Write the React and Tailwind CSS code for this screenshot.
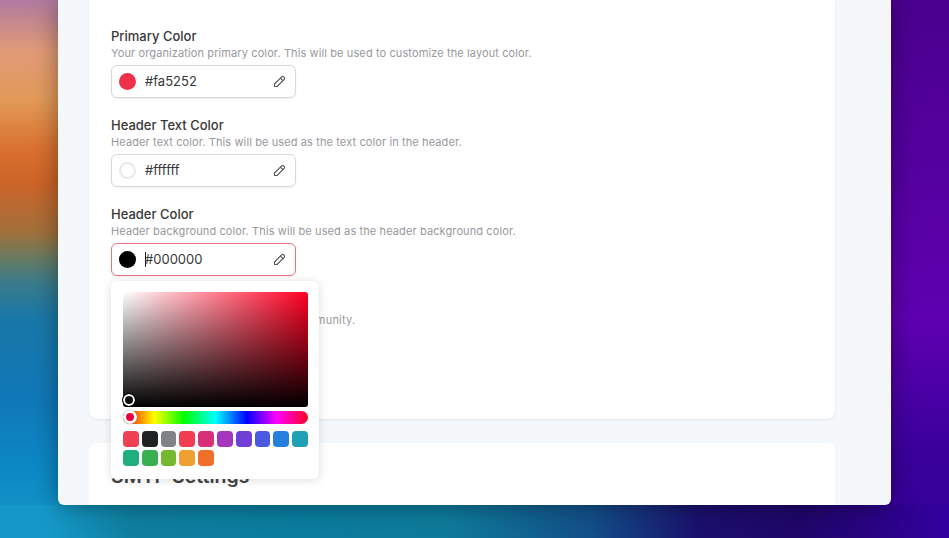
const swatches = [
  'bg-[#ef4056]', 'bg-[#212224]', 'bg-[#7f8388]', 'bg-[#f23c50]', 'bg-[#d92f78]',
  'bg-[#a436c0]', 'bg-[#6f3fd8]', 'bg-[#4a5ae0]', 'bg-[#2480dc]', 'bg-[#1fa0b4]',
  'bg-[#1fae80]', 'bg-[#38b050]', 'bg-[#74b82e]', 'bg-[#f0a030]', 'bg-[#f0702a]',
]

function PenIcon() {
  return (
    <svg viewBox="0 0 24 24" fill="none" stroke="currentColor" strokeWidth="1.75" strokeLinecap="round" strokeLinejoin="round" className="ml-auto h-[15px] w-[15px] text-[#555]">
      <path d="M4 20v-4L15.5 4.5a2.1 2.1 0 0 1 3 0l1 1a2.1 2.1 0 0 1 0 3L8 20z" />
      <path d="M13.5 6.5l4 4" />
    </svg>
  )
}

function ColorPopover() {
  return (
    <div className="absolute left-0 top-full z-10 mt-[5px] h-[198px] w-[208px] rounded-md bg-white py-[11px] pl-[12px] pr-[11px] shadow-[0_1px_10px_rgba(0,0,0,0.14)]">
      <div className="relative h-[115px] rounded-[3px] bg-[linear-gradient(0deg,#000,transparent),linear-gradient(90deg,#fff,#ff0022)]">
        <span className="absolute left-0 top-[102px] h-[12px] w-[12px] rounded-full border-2 border-white outline outline-1 outline-black" />
      </div>
      <div className="relative mt-[4px] h-[13px] rounded-full bg-[linear-gradient(90deg,#ff0000,#ffff00_17%,#00ff00_33%,#00ffff_50%,#0000ff_67%,#ff00ff_83%,#ff0022)]">
        <span className="absolute -top-px left-0 h-[14px] w-[14px] rounded-full border-[3px] border-white bg-[#e8003c] shadow-[0_0_1px_rgba(0,0,0,0.6)]" />
      </div>
      <div className="mt-[7px] grid grid-cols-10 gap-[3px]">
        {swatches.map((color, i) => (
          <div key={i} className={`h-[16px] rounded-[4px] ${color}`} />
        ))}
      </div>
    </div>
  )
}

function ColorField({ label, description, value, swatch, focused, children }) {
  return (
    <div>
      <div className="text-[13px] font-medium leading-[20px] text-[#383838]">{label}</div>
      <div className="text-[11px] leading-[14px] tracking-[0.11px] text-[#97999d]">{description}</div>
      <div className="relative mt-[5px] w-[185px]">
        <div className={`flex h-[33px] items-center rounded-md border bg-white pl-[7px] pr-[8px] shadow-[0_1px_2px_rgba(0,0,0,0.06)] ${focused ? 'border-[#f0707f]' : 'border-[#d5d9de]'}`}>
          <span className={`h-[17px] w-[17px] rounded-full ${swatch}`} />
          {focused && <span className="-mr-px ml-[9px] h-[15px] w-px bg-[#222]" />}
          <span className={`text-[13px] text-[#383838] ${focused ? '' : 'ml-[9px]'}`}>{value}</span>
          <PenIcon />
        </div>
        {children}
      </div>
    </div>
  )
}

export default function App() {
  return (
    <div className="flex h-[538px] w-[949px] overflow-hidden px-[58px] pb-[33px] font-['Inter',sans-serif] [background:linear-gradient(90deg,#1598c8_0,#1598c8_50px,#0f7f9f_130px,#0a7c9e_300px,#0e7a9a_450px,#134f88_590px,#1a0f6c_700px,#1f0668_800px,#3300a0_949px)_0_100%/100%_33px_no-repeat,linear-gradient(180deg,#b07aa0_0,#e09a78_50px,#e29a58_100px,#d97030_150px,#cc6428_183px,#a0703c_233px,#6a7a60_257px,#3a7a8a_283px,#1a78a8_317px,#1078b8_400px,#0c88c4_467px,#1598c8_538px)_0_0/90px_100%_no-repeat,linear-gradient(180deg,#4a008e_0,#5e00b0_320px,#3a009c_450px,#330098_538px)_100%_0/80px_100%_no-repeat]">
      <div className="flex h-full w-full flex-col overflow-hidden rounded-b-md bg-[#f4f8fb] pl-[31px] pr-[56px] shadow-[0_0_24px_rgba(0,0,0,0.4)]">
        <div className="h-[419px] shrink-0 rounded-b-lg bg-white px-[22px] pt-[26px] shadow-[0_1px_2px_rgba(0,0,0,0.08)]">
          <div className="flex flex-col gap-[17px]">
            <ColorField
              label="Primary Color"
              description="Your organization primary color. This will be used to customize the layout color."
              value="#fa5252"
              swatch="bg-[#f03048]"
            />
            <ColorField
              label="Header Text Color"
              description="Header text color. This will be used as the text color in the header."
              value="#ffffff"
              swatch="bg-white border-2 border-[#e6e8ea]"
            />
            <ColorField
              label="Header Color"
              description="Header background color. This will be used as the header background color."
              value="#000000"
              swatch="bg-black"
              focused
            >
              <ColorPopover />
            </ColorField>
            <div>
              <div className="text-[13px] font-medium leading-[20px] text-[#383838]">Powered By</div>
              <div className="text-[11px] leading-[14px] tracking-[0.2px] text-[#97999d]">Show powered by banner to your community.</div>
            </div>
          </div>
        </div>
        <div className="mt-[24px] flex-1 rounded-t-lg bg-white px-[22px] pt-[21px]">
          <div className="text-[19.5px] font-semibold leading-[24px] text-[#444]">SMTP Settings</div>
        </div>
      </div>
    </div>
  )
}
